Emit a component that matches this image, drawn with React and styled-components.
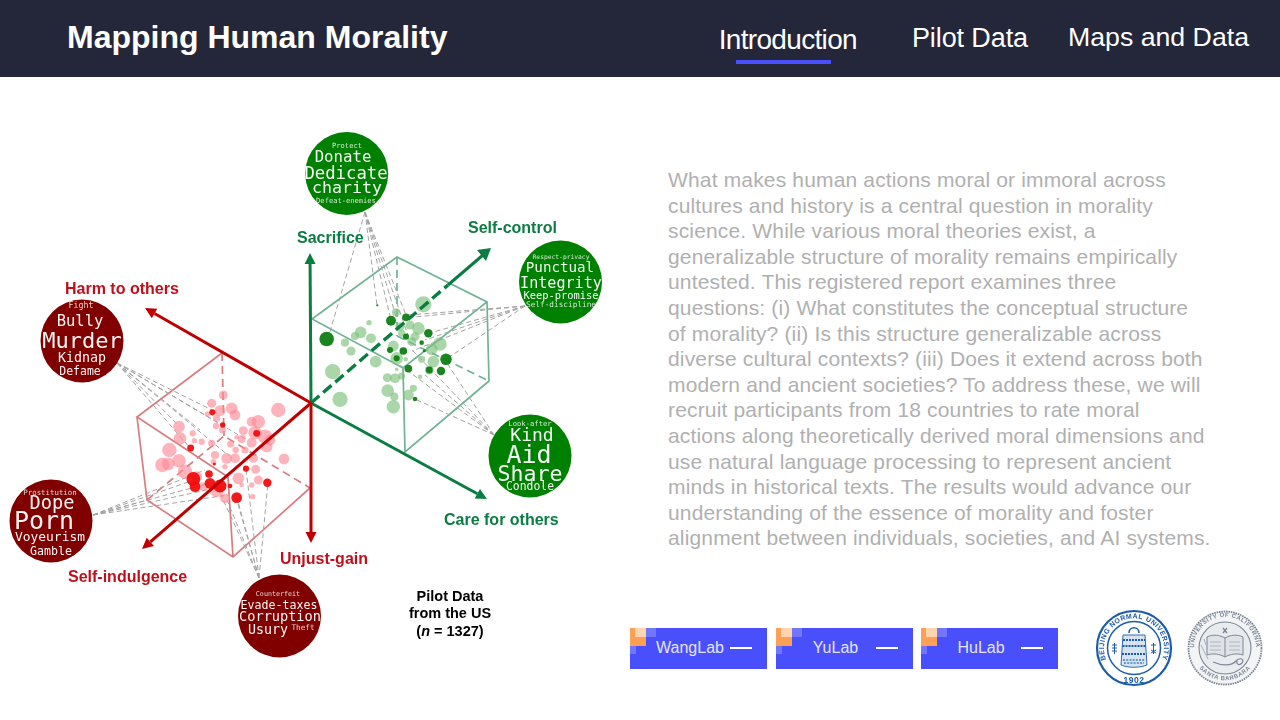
import React from "react";
import styled, { createGlobalStyle } from "styled-components";

const GlobalStyle = createGlobalStyle`
  html, body { margin: 0; padding: 0; background: #fff; }
  body { font-family: "Liberation Sans", Arial, sans-serif; }
`;

const Page = styled.div`
  width: 1280px;
  height: 720px;
  overflow: hidden;
  background: #fff;
`;

const Header = styled.header`
  height: 77px;
  background: #24263a;
  display: flex;
  align-items: flex-start;
  color: #fff;
`;

const Title = styled.h1`
  margin: 0;
  padding: 19px 0 0 67px;
  flex: 1;
  font-size: 32px;
  line-height: 37px;
  font-weight: 700;
`;

const Nav = styled.nav`
  display: flex;
  padding-right: 31px;
`;

const NavItem = styled.a`
  position: relative;
  margin-left: ${(p) => p.$gap}px;
  padding-top: ${(p) => p.$top}px;
  font-size: ${(p) => p.$size}px;
  line-height: 32px;
  letter-spacing: ${(p) => p.$track}px;
  color: #fff;
  white-space: nowrap;

  ${(p) => p.$active && `
    &::after {
      content: "";
      position: absolute;
      left: 17px;
      top: 60px;
      width: 95px;
      height: 4px;
      background: #4a4ffc;
    }
  `}
`;

const Main = styled.main`
  display: flex;
  height: 643px;
`;

const Figure = styled.svg`
  display: block;
  flex: none;
  width: 620px;
  height: 643px;
  filter: blur(0.3px);
`;

const RightColumn = styled.section`
  flex: 1;
  display: flex;
  flex-direction: column;
  padding-top: 90px;
`;

const Abstract = styled.p`
  margin: 0 0 58.5px 48px;
  width: 543.5px;
  font-size: 21px;
  line-height: 25.6px;
  letter-spacing: 0.16px;
  color: #b0b0b0;
`;

const FooterRow = styled.div`
  display: flex;
  align-items: center;
  gap: 8.5px;
  padding-left: 10px;
`;

const LabButton = styled.a`
  display: flex;
  align-items: center;
  width: 137px;
  height: 41px;
  padding: 0 15px 0 20px;
  box-sizing: border-box;
  color: #e4e5ff;
  font-size: 16px;
  background:
    linear-gradient(#fdd6b0, #fdd6b0) 5px 0 / 11px 9px no-repeat,
    linear-gradient(#fd9f55, #fd9f55) 0 0 / 16px 18px no-repeat,
    linear-gradient(#7276fd, #7276fd) 16px 0 / 10px 9px no-repeat,
    linear-gradient(#7276fd, #7276fd) 0 18px / 6px 8px no-repeat,
    #4a4ffc;
`;

const LabName = styled.span`
  flex: 1;
  text-align: center;
`;

const LabDash = styled.span`
  width: 22px;
  height: 2px;
  background: #fff;
`;

const Seals = styled.div`
  display: flex;
  align-items: center;
  gap: 13px;
  margin-left: 28px;
`;

const Seal = styled.svg`
  display: block;
  width: 78px;
  height: 78px;
  filter: blur(0.35px);
`;

const SealText = styled.text`
  font-family: "Liberation Sans", Arial, sans-serif;
  font-weight: 700;
  font-size: ${(p) => p.$size}px;
  letter-spacing: ${(p) => p.$track || 0}px;
  fill: ${(p) => p.$color};
  text-anchor: middle;
`;

const AxisLabel = styled.text`
  font-family: "Liberation Sans", Arial, sans-serif;
  font-weight: 700;
  font-size: 16px;
  fill: ${(p) => p.$color};
`;

const PilotNote = styled.text`
  font-family: "Liberation Sans", Arial, sans-serif;
  font-weight: 700;
  font-size: 14.5px;
  fill: #000;
  text-anchor: middle;
`;

const CloudWord = styled.text`
  font-family: "DejaVu Sans Mono", monospace;
  font-size: ${(p) => p.$size}px;
  fill: #fff;
  text-anchor: middle;
  opacity: ${(p) => (p.$size < 9 ? 0.82 : 0.96)};
`;

const GuideLine = styled.line`
  stroke: #a3a3a3;
  stroke-width: 1;
  stroke-dasharray: 5 3;
`;

const RED = "#c00000";
const GREEN = "#0a7d42";
const RED_CUBE = "#d97c7f";
const GREEN_CUBE = "#70b396";
const ORIGIN = [311, 403];

// word clouds: [word, x, baseline, size]
const clouds = [
  { cx: 346.7, cy: 173.5, fill: "#008000", words: [
    ["Protect", 347, 148, 7.1], ["Donate", 343, 162, 15.7], ["Dedicate", 346, 179, 17.3],
    ["charity", 347, 193, 16.6], ["Defeat-enemies", 346, 203, 7.1] ] },
  { cx: 560.5, cy: 282, fill: "#008000", words: [
    ["Respect-privacy", 561, 259, 6.3], ["Punctual", 560, 272, 14.2], ["Integrity", 561, 288, 15.1],
    ["Keep-promise", 561, 299, 10.4], ["Self-discipline", 561, 307, 7.75] ] },
  { cx: 530, cy: 456, fill: "#008000", words: [
    ["Look-after", 530, 426, 7.2], ["Kind", 532, 441, 18], ["Aid", 529, 463, 25],
    ["Share", 530, 481, 21.6], ["Condole", 530, 490, 11.4] ] },
  { cx: 82, cy: 341, fill: "#800000", words: [
    ["Fight", 81, 308, 8.3], ["Bully", 80, 326, 15.5], ["Murder", 82, 348, 22],
    ["Kidnap", 82, 362, 13.3], ["Defame", 80, 375, 11.5] ] },
  { cx: 51, cy: 521, fill: "#800000", words: [
    ["Prostitution", 50, 495, 7.4], ["Dope", 52, 509, 18.7], ["Porn", 44, 529, 25],
    ["Voyeurism", 50, 541, 12.9], ["Gamble", 51, 555, 11.6] ] },
  { cx: 279.5, cy: 616, fill: "#800000", words: [
    ["Counterfeit", 278, 596, 6.7], ["Evade-taxes", 279, 609, 11.6], ["Corruption", 280, 621, 13.6],
    ["Usury", 268, 634, 13.3], ["Theft", 303, 630, 7.7] ] },
];

const guides = [
  [[117, 363], [[214, 411], [222, 425], [190, 448], [229, 456], [200, 430], [247, 440], [178, 425]]],
  [[93, 515], [[194, 480], [210, 483], [220, 487], [205, 470], [147, 500], [228, 495]]],
  [[259, 578], [[237, 498], [268, 482], [246, 469], [221, 495], [227, 500], [236, 497]]],
  [[365, 212], [[329, 335], [377, 305], [391, 320], [406, 315], [397, 320], [408, 335]]],
  [[525, 306], [[408, 315], [405, 318], [430, 333], [425, 340], [445, 360], [412, 351]]],
  [[494, 435], [[415, 399], [445, 360], [412, 350], [425, 375], [400, 365]]],
];

// scatter dots, [x, y, r] in zoomed crop units, see toRed / toGreen
const redSoft = [[835,60,16],[775,95,15],[755,95,11],[695,55,13],[705,75,12],[635,40,10],[660,62,12],[622,72,6],[650,85,8],[648,108,7],[668,120,8],[670,15,10],[537,110,13],[578,130,7],[540,145,14],[605,155,7],[583,152,6],[635,160,8],[730,122,10],[765,128,15],[795,140,16],[810,150,12],[755,158,11],[725,147,9],[692,162,8],[710,142,5],[735,180,8],[800,170,13],[852,207,12],[508,180,16],[537,212,15],[505,222,14],[487,225,16],[555,245,16],[590,260,12],[645,195,9],[680,205,12],[705,205,11],[760,205,10],[707,180,7],[640,215,6],[675,230,6],[767,238,10],[715,265,13],[775,270,10],[755,285,6],[725,285,5],[650,300,16],[675,325,11],[758,320,6],[610,290,10]];
const redHard = [[580,267,18],[585,290,14],[630,280,14],[660,288,17],[710,323,14],[802,278,11],[738,236,8],[627,252,10],[572,174,9],[637,67,8],[668,105,7],[690,288,6],[770,130,9],[643,222,4]];
const greenSoft = [[400,553,18],[318,577,9],[237,608,6],[212,637,13],[195,648,9],[243,655,11],[165,668,9],[183,693,10],[257,725,13],[128,755,17],[385,625,14],[360,615,10],[330,620,10],[335,640,8],[375,650,10],[365,665,10],[450,672,15],[425,688,13],[395,718,8],[430,725,13],[310,678,12],[320,715,14],[347,718,5],[320,748,4],[292,773,10],[315,775,11],[335,768,8],[370,805,8],[293,812,14],[313,830,9],[355,825,12],[150,838,17],[390,770,5],[418,750,10],[310,860,15]];
const greenHard = [[110,657,19],[303,602,13],[348,592,10],[415,640,11],[348,650,8],[395,668,6],[340,693,10],[300,690,8],[468,718,15],[355,746,10],[453,753,11],[418,750,9],[320,715,8],[375,837,6],[403,692,4],[262,556,3]];

const toRed = (scale) => ([x, y, r]) => [x / 3, 390 + y / 3, (r / 3) * scale];
const toGreen = (scale) => ([x, y, r]) => [290 + x / 3, 120 + y / 3, (r / 3) * scale];

function Arrow({ to, color }) {
  const [x1, y1] = ORIGIN;
  const [x2, y2] = to;
  const len = Math.hypot(x2 - x1, y2 - y1);
  const ux = (x2 - x1) / len;
  const uy = (y2 - y1) / len;
  const bx = x2 - ux * 11;
  const by = y2 - uy * 11;
  const head = `${x2},${y2} ${bx - uy * 5.5},${by + ux * 5.5} ${bx + uy * 5.5},${by - ux * 5.5}`;
  return (
    <g>
      <line x1={x1} y1={y1} x2={bx} y2={by} stroke={color} strokeWidth="3" />
      <polygon points={head} fill={color} />
    </g>
  );
}

function Dots({ items, fill, opacity }) {
  return items.map(([x, y, r], i) => (
    <circle key={i} cx={x} cy={y} r={r} fill={fill} opacity={opacity} />
  ));
}

function MoralityFigure() {
  return (
    <Figure viewBox="0 77 620 643">
      <g fill="none" stroke={GREEN_CUBE} strokeWidth="1.7">
        <path d="M312 319 L397 257 L487 302 L403 368 Z M487 302 L489 381 L405 452 L403 368" />
        <path d="M397 257 L397 336 M397 336 L489 381" strokeDasharray="8 5" />
      </g>
      <g fill="none" stroke={RED_CUBE} strokeWidth="1.7">
        <path d="M222 353 L137 417 L228 477 M137 417 L147 500 L233 557 L310 488 M228 477 L233 557" />
        <path d="M222 353 L224 436 M147 500 L224 436 L310 488" strokeDasharray="8 5" />
      </g>

      {guides.map(([from, targets], i) =>
        targets.map((t, j) => (
          <GuideLine key={`${i}-${j}`} x1={from[0]} y1={from[1]} x2={t[0]} y2={t[1]} />
        ))
      )}

      <Dots items={greenSoft.map(toGreen(1.35))} fill="#7cc07c" opacity="0.65" />
      <Dots items={greenHard.map(toGreen(1.15))} fill="#0f7f14" opacity="0.95" />
      <Dots items={redSoft.map(toRed(1.35))} fill="#ff8a95" opacity="0.65" />
      <Dots items={redHard.map(toRed(1.15))} fill="#f00d0d" opacity="0.95" />

      <line x1="311" y1="403" x2="448" y2="285" stroke={GREEN} strokeWidth="3.4" strokeDasharray="11 5" />
      <line x1="448" y1="285" x2="483" y2="255" stroke={GREEN} strokeWidth="3" />
      <polygon points="491,248 486,261 477,250" fill={GREEN} />
      <Arrow to={[310, 253]} color={GREEN} />
      <Arrow to={[487, 499]} color={GREEN} />
      <Arrow to={[145, 308]} color={RED} />
      <Arrow to={[142, 549]} color={RED} />
      <Arrow to={[311, 543]} color={RED} />

      <AxisLabel x="65" y="294" $color="#c00f1b">Harm to others</AxisLabel>
      <AxisLabel x="68" y="582" $color="#c00f1b">Self-indulgence</AxisLabel>
      <AxisLabel x="280" y="564" $color="#c00f1b">Unjust-gain</AxisLabel>
      <AxisLabel x="297" y="243" $color="#0c7d42">Sacrifice</AxisLabel>
      <AxisLabel x="468" y="233" $color="#0c7d42">Self-control</AxisLabel>
      <AxisLabel x="444" y="525" $color="#0c7d42">Care for others</AxisLabel>

      {clouds.map((c) => (
        <g key={c.cx}>
          <circle cx={c.cx} cy={c.cy} r="41.5" fill={c.fill} />
          {c.words.map(([word, x, y, size]) => (
            <CloudWord key={word} x={x} y={y} $size={size}>{word}</CloudWord>
          ))}
        </g>
      ))}

      <PilotNote x="450" y="601">Pilot Data</PilotNote>
      <PilotNote x="450" y="618">from the US</PilotNote>
      <PilotNote x="450" y="636">(<tspan fontStyle="italic">n</tspan> = 1327)</PilotNote>
    </Figure>
  );
}

function BeijingSeal() {
  const blue = "#1c5ba8";
  return (
    <Seal viewBox="0 0 78 78">
      <defs>
        <path id="bnuArc" d="M14.5 60 A32 32 0 1 1 63.5 60" />
      </defs>
      <circle cx="39" cy="39" r="37" fill="none" stroke={blue} strokeWidth="2.2" />
      <circle cx="39" cy="39" r="26.5" fill="none" stroke={blue} strokeWidth="1.5" />
      <SealText $size={7} $track={0.8} $color={blue} dy="2">
        <textPath href="#bnuArc" startOffset="50%">BEIJING NORMAL UNIVERSITY</textPath>
      </SealText>
      <SealText x="39" y="74" $size={8.5} $track={0.5} $color={blue}>1902</SealText>
      <path d="M34 24 C34 17 44 17 44 24" fill="none" stroke={blue} strokeWidth="1.6" />
      <path d="M28 26 H50 L52 56 C45 59 33 59 26 56 Z" fill="#d5e3f3" stroke={blue} strokeWidth="0.9" />
      <path d="M28 31 H50 M27.5 37 H50.5 M27 45 H51" stroke={blue} strokeWidth="2" strokeDasharray="2 1" />
      <path d="M28 51 H50 M29 54 H49" stroke={blue} strokeWidth="1.6" strokeDasharray="2 1.2" opacity="0.75" />
      <path d="M17 36 H22 M17 39 H22 M17 42 H22 M19.5 34 V45" stroke={blue} strokeWidth="1" />
      <path d="M56 36 H61 M58.5 34 V45 M56 41 L61 44 M61 41 L56 44" stroke={blue} strokeWidth="1" />
    </Seal>
  );
}

function CaliforniaSeal() {
  const gray = "#7d8694";
  return (
    <Seal viewBox="0 0 78 78">
      <defs>
        <path id="ucArc" d="M12 54 A31 31 0 1 1 66 54" />
        <path id="sbArc" d="M9 52 A33 33 0 0 0 69 52" />
      </defs>
      <circle cx="39" cy="39" r="36.5" fill="#f3f4f6" stroke={gray} strokeWidth="1.8" strokeDasharray="1.6 0.8" />
      <circle cx="39" cy="39" r="26" fill="#e9ecef" stroke={gray} strokeWidth="1.1" />
      <SealText $size={6} $track={0.5} $color={gray}>
        <textPath href="#ucArc" startOffset="50%">UNIVERSITY OF CALIFORNIA</textPath>
      </SealText>
      <SealText $size={6} $track={0.5} $color={gray}>
        <textPath href="#sbArc" startOffset="50%">SANTA BARBARA</textPath>
      </SealText>
      <path d="M21 28 C27 25 34 26 39 29 C44 26 51 25 57 28 V46 C51 44 44 45 39 48 C34 45 27 44 21 46 Z" fill="#dfe3e8" stroke={gray} strokeWidth="1" />
      <path d="M39 29 V48" stroke={gray} strokeWidth="1" />
      <path d="M24 33 H35 M24 37 H35 M24 41 H35 M43 33 H54 M43 37 H54 M43 41 H54" stroke="#a9b1bc" strokeWidth="0.9" />
      <path d="M37 19 L41 24 M41 19 L37 24" stroke={gray} strokeWidth="1.4" />
      <path d="M27 53 C34 56 45 58 50 52 C54 48 59 50 56 54 C53 57 50 55 51 52" fill="none" stroke={gray} strokeWidth="1.2" />
      <path d="M15 36 L22 50 M18 30 L20 36" stroke="#a9b1bc" strokeWidth="1" />
    </Seal>
  );
}

const labs = ["WangLab", "YuLab", "HuLab"];

export default function App() {
  return (
    <Page>
      <GlobalStyle />
      <Header>
        <Title>Mapping Human Morality</Title>
        <Nav>
          <NavItem $active $gap={0} $top={24} $size={28} $track={-0.67}>Introduction</NavItem>
          <NavItem $gap={55} $top={22} $size={27} $track={-0.1}>Pilot Data</NavItem>
          <NavItem $gap={40} $top={21} $size={26.7} $track={0}>Maps and Data</NavItem>
        </Nav>
      </Header>
      <Main>
        <MoralityFigure />
        <RightColumn>
          <Abstract>
            What makes human actions moral or immoral across cultures and history is a central question in morality science. While various moral theories exist, a generalizable structure of morality remains empirically untested. This registered report examines three questions: (i) What constitutes the conceptual structure of morality? (ii) Is this structure generalizable across diverse cultural contexts? (iii) Does it extend across both modern and ancient societies? To address these, we will recruit participants from 18 countries to rate moral actions along theoretically derived moral dimensions and use natural language processing to represent ancient minds in historical texts. The results would advance our understanding of the essence of morality and foster alignment between individuals, societies, and AI systems.
          </Abstract>
          <FooterRow>
            {labs.map((lab) => (
              <LabButton key={lab}>
                <LabName>{lab}</LabName>
                <LabDash />
              </LabButton>
            ))}
            <Seals>
              <BeijingSeal />
              <CaliforniaSeal />
            </Seals>
          </FooterRow>
        </RightColumn>
      </Main>
    </Page>
  );
}
